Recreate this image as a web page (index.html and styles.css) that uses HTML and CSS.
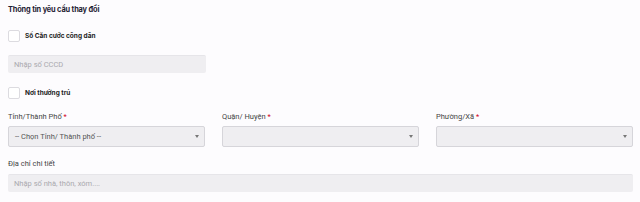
FILE: index.html
```html
<!DOCTYPE html>
<html lang="vi">
<head>
  <meta charset="UTF-8" />
  <title>Thông tin yêu cầu thay đổi</title>
  <link rel="stylesheet" href="styles.css">
</head>
<body>
  <div class="form-block">
    <h3 class="title">Thông tin yêu cầu thay đổi</h3>

    <label class="check-row">
      <span class="box"></span>
      <span class="check-label">Số Căn cước công dân</span>
    </label>
    <div class="short-field">
      <div class="input">Nhập số CCCD</div>
    </div>

    <label class="check-row second">
      <span class="box"></span>
      <span class="check-label">Nơi thường trú</span>
    </label>

    <div class="cols">
      <div class="field">
        <div class="label">Tỉnh/Thành Phố <span class="req">*</span></div>
        <div class="select"><span>-- Chọn Tỉnh/ Thành phố --</span><span class="arrow"></span></div>
      </div>
      <div class="field">
        <div class="label">Quận/ Huyện <span class="req">*</span></div>
        <div class="select"><span></span><span class="arrow"></span></div>
      </div>
      <div class="field">
        <div class="label">Phường/Xã <span class="req">*</span></div>
        <div class="select"><span></span><span class="arrow"></span></div>
      </div>
    </div>

    <div class="field full">
      <div class="label">Địa chỉ chi tiết</div>
      <div class="input">Nhập số nhà, thôn, xóm....</div>
    </div>
  </div>
</body>
</html>
```

FILE: styles.css
```css
body {
  margin: 0;
  background: #fdfcfe;
  font-family: Roboto, Arial, sans-serif;
  color: #333;
}

.form-block {
  padding: 0 7px 0 8px;
}

.title {
  margin: 0;
  padding-top: 3px;
  font-family: Inter, Roboto, sans-serif;
  font-size: 7.4px;
  font-weight: 700;
  letter-spacing: -0.15px;
  color: #1f2233;
  line-height: 13px;
}

.check-row {
  display: flex;
  align-items: center;
  gap: 5px;
  margin-top: 14px;
  height: 12px;
}

.check-row.second {
  margin-top: 14px;
}

.box {
  width: 10px;
  height: 10px;
  border: 1px solid #dcdbe0;
  border-radius: 2px;
  background: #fff;
}

.check-label {
  font-family: Inter, Roboto, sans-serif;
  font-size: 6.5px;
  font-weight: 700;
  color: #222;
}

.short-field {
  width: 198px;
  margin-top: 13px;
}

.input {
  height: 17px;
  line-height: 17px;
  background: #efeef1;
  border-top: 1px solid #e6e5e9;
  padding-left: 6px;
  font-size: 7.5px;
  color: #aaa9ae;
  border-radius: 2px;
}

.cols {
  display: grid;
  grid-template-columns: repeat(3, 197px);
  column-gap: 17px;
  margin-top: 13px;
}

.label {
  font-size: 7.5px;
  color: #444;
  height: 10px;
  line-height: 10px;
  margin-bottom: 4px;
}

.req {
  color: #d0021b;
}

.select {
  display: flex;
  align-items: center;
  justify-content: space-between;
  height: 19px;
  background: #efeef1;
  border: 1px solid #d6d5da;
  border-radius: 2px;
  padding: 0 5px 0 6px;
  font-size: 7.5px;
  color: #555;
}

.arrow {
  width: 0;
  height: 0;
  border-left: 2px solid transparent;
  border-right: 2px solid transparent;
  border-top: 3px solid #777;
}

.field.full {
  margin-top: 12px;
}

.field.full .label {
  margin-bottom: 5px;
}
```
